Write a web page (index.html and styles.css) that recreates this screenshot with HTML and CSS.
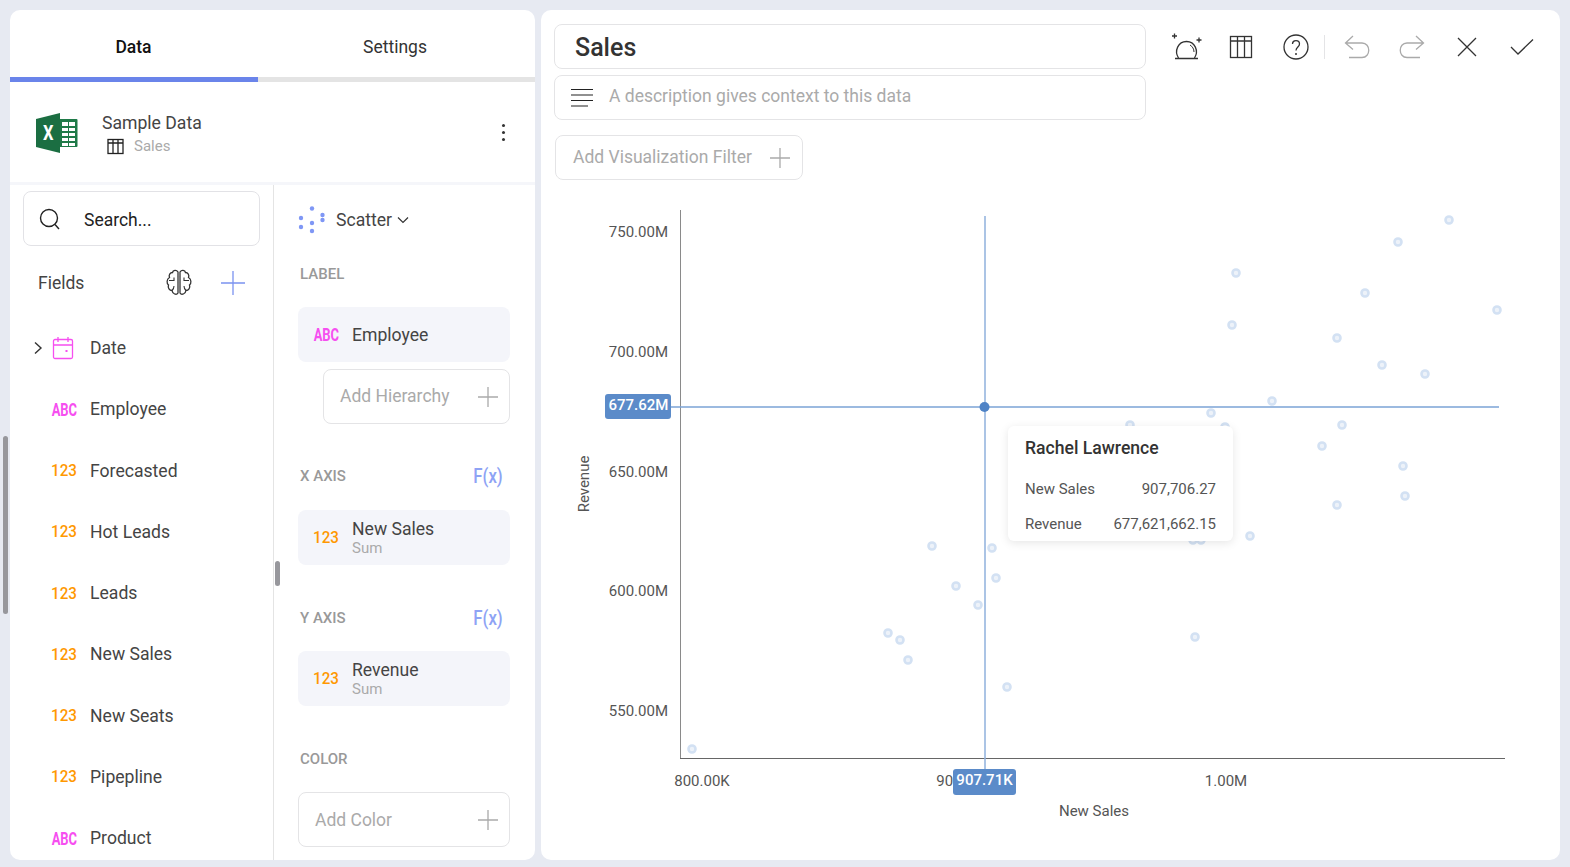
FILE: index.html
```html
<!DOCTYPE html>
<html lang="en">
<head>
  <meta charset="UTF-8">
  <title>Sales - Visualization Editor</title>
  <link rel="stylesheet" href="styles.css">
</head>
<body>
  <div class="page-scroll"></div>

  <div class="side-panel">
    <div class="tabs">
      <div class="tab active">Data</div>
      <div class="tab">Settings</div>
    </div>

    <div class="source">
      <svg class="excel-logo" width="42" height="40" viewBox="0 0 42 40">
        <rect x="22" y="6" width="19.500" height="28" rx="1" fill="#1f7a48"/>
        <g fill="#fff">
          <rect x="26" y="9" width="6" height="4"/><rect x="33" y="9" width="6" height="4"/>
          <rect x="26" y="15" width="6" height="3"/><rect x="33" y="15" width="6" height="3"/>
          <rect x="26" y="20" width="6" height="3"/><rect x="33" y="20" width="6" height="3"/>
          <rect x="26" y="25" width="6" height="3"/><rect x="33" y="25" width="6" height="3"/>
          <rect x="26" y="30" width="6" height="3"/><rect x="33" y="30" width="6" height="3"/>
        </g>
        <path d="M0 6 L24 0 V40 L0 34 Z" fill="#1b6e42"/>
        <text x="7" y="27" class="excel-x" textLength="10.500" lengthAdjust="spacingAndGlyphs">X</text>
      </svg>
      <div class="source-text">
        <div class="source-name">Sample Data</div>
        <div class="source-sub">
          <svg width="17" height="17" viewBox="0 0 17 17" fill="none" stroke="#222" stroke-width="1.300">
            <rect x="1" y="1.500" width="15" height="14"/>
            <path d="M1 5 H16 M6 1.500 V15.500 M11 1.500 V15.500"/>
          </svg>
          <span>Sales</span>
        </div>
      </div>
      <div class="kebab"><i></i><i></i><i></i></div>
    </div>

    <div class="columns">
      <div class="fields-col">
        <div class="search">
          <svg width="22" height="24" viewBox="0 0 22 24" fill="none" stroke="#222" stroke-width="1.400">
            <circle cx="10" cy="11" r="8.500"/>
            <path d="M16 17.500 L20 22"/>
          </svg>
          <span>Search...</span>
        </div>
        <div class="fields-head">
          <span>Fields</span>
          <svg class="brain" width="26" height="27" viewBox="0 0 26 27" fill="none" stroke="#333" stroke-width="1.300">
            <path d="M12 3 C10.500 .500 7 1 6.500 3.500 C4 3.500 2.500 6 3.500 8.500 C.500 10 .500 14.500 2.500 16 C1.500 19 3.500 21.500 6 21.500 C6.500 25 10.500 26.500 12 24 Z"/>
            <path d="M14 3 C15.500 .500 19 1 19.500 3.500 C22 3.500 23.500 6 22.500 8.500 C25.500 10 25.500 14.500 23.500 16 C24.500 19 22.500 21.500 20 21.500 C19.500 25 15.500 26.500 14 24 Z"/>
            <path d="M3 11.500 H8 V8.500 M23 11.500 H18 V8.500 M6 21.500 C7.500 20 8 19 8 17 M20 21.500 C18.500 20 18 19 18 17" stroke-width="1.100"/>
          </svg>
          <svg class="plus" width="24" height="24" viewBox="0 0 24 24" stroke="#7b93f0" stroke-width="1.300">
            <path d="M12 0 V24 M0 12 H24"/>
          </svg>
        </div>
        <div class="field-list">
          <div class="field">
            <svg class="expand" width="10" height="14" viewBox="0 0 10 14" fill="none" stroke="#333" stroke-width="1.400"><path d="M2 1.500 L8 7 L2 12.500"/></svg>
            <svg class="calendar" width="22" height="24" viewBox="0 0 22 24" fill="none" stroke="#f64ff0" stroke-width="1.300">
              <rect x="1.500" y="3.500" width="19" height="19" rx="1.500"/>
              <path d="M1.500 9 H20.500 M6 1 V6 M16 1 V6"/>
              <rect x="13.500" y="14" width="2" height="2" fill="#f64ff0" stroke="none"/>
            </svg>
            <span class="field-name">Date</span>
          </div>
          <div class="field"><b class="type abc">ABC</b><span class="field-name">Employee</span></div>
          <div class="field"><b class="type num">123</b><span class="field-name">Forecasted</span></div>
          <div class="field"><b class="type num">123</b><span class="field-name">Hot Leads</span></div>
          <div class="field"><b class="type num">123</b><span class="field-name">Leads</span></div>
          <div class="field"><b class="type num">123</b><span class="field-name">New Sales</span></div>
          <div class="field"><b class="type num">123</b><span class="field-name">New Seats</span></div>
          <div class="field"><b class="type num">123</b><span class="field-name">Pipepline</span></div>
          <div class="field"><b class="type abc">ABC</b><span class="field-name">Product</span></div>
        </div>
      </div>

      <div class="config-col">
        <div class="col-scroll"></div>
        <div class="chart-type">
          <svg width="30" height="28" viewBox="0 0 30 28" fill="#7f97f5">
            <circle cx="14" cy="2.500" r="2.200"/><circle cx="24.500" cy="9" r="2.200"/><circle cx="24.500" cy="14" r="2.200"/>
            <circle cx="3" cy="12" r="2.200"/><circle cx="14" cy="17" r="2.200"/><circle cx="3" cy="21" r="2.200"/><circle cx="14" cy="25" r="2.200"/>
          </svg>
          <span>Scatter</span>
          <svg width="12" height="8" viewBox="0 0 12 8" fill="none" stroke="#333" stroke-width="1.200"><path d="M1 1.500 L6 6.500 L11 1.500"/></svg>
        </div>

        <div class="section-head first">LABEL</div>
        <div class="pill"><b class="type abc">ABC</b><div class="pill-text"><div>Employee</div></div></div>
        <div class="add-box hierarchy"><span>Add Hierarchy</span>
          <svg width="20" height="20" viewBox="0 0 20 20" stroke="#aaa" stroke-width="1.300"><path d="M10 0 V20 M0 10 H20"/></svg>
        </div>

        <div class="section-head x-axis">X AXIS<em>F(x)</em></div>
        <div class="pill"><b class="type num">123</b><div class="pill-text"><div>New Sales</div><small>Sum</small></div></div>

        <div class="section-head y-axis">Y AXIS<em>F(x)</em></div>
        <div class="pill"><b class="type num">123</b><div class="pill-text"><div>Revenue</div><small>Sum</small></div></div>

        <div class="section-head color">COLOR</div>
        <div class="add-box"><span>Add Color</span>
          <svg width="20" height="20" viewBox="0 0 20 20" stroke="#aaa" stroke-width="1.300"><path d="M10 0 V20 M0 10 H20"/></svg>
        </div>
      </div>
    </div>
  </div>

  <div class="main-panel">
    <div class="top-row">
      <div class="title-col">
        <div class="title-input">Sales</div>
        <div class="desc-input">
          <svg width="24" height="20" viewBox="0 0 24 20" stroke="#222" stroke-width="1.200">
            <path d="M1 1.500 H23 M1 7 H23 M1 12.500 H23 M1 18 H18"/>
          </svg>
          <span>A description gives context to this data</span>
        </div>
      </div>
      <div class="toolbar">
        <div class="tool">
          <svg width="34" height="30" viewBox="0 0 34 30" fill="none" stroke="#333" stroke-width="1.300">
            <path d="M9.500 26 C5 19 9 9.500 17.500 9.500 C26 9.500 30 19 25.500 26"/>
            <path d="M6 26.500 H29"/>
            <path d="M21 13 C23.500 14.500 25 17 25 20" stroke-width="1"/>
            <path d="M5.500 1.500 V6.500 M3 4 H8 M30 5.500 V10.500 M27.500 8 H32.500" stroke-width="1.300"/>
          </svg>
        </div>
        <div class="tool">
          <svg width="24" height="24" viewBox="0 0 24 24" fill="none" stroke="#333" stroke-width="1.300">
            <rect x="1.500" y="1.500" width="21" height="21"/>
            <path d="M1.500 6 H22.500 M8.500 1.500 V22.500 M15.500 1.500 V22.500"/>
          </svg>
        </div>
        <div class="tool">
          <svg width="26" height="26" viewBox="0 0 26 26" fill="none" stroke="#333" stroke-width="1.300">
            <circle cx="13" cy="13" r="12"/>
            <path d="M9.500 10 C9.500 5.500 16.500 5.500 16.500 10 C16.500 13 13 13 13 16.500"/>
            <circle cx="13" cy="20" r="1" fill="#333" stroke="none"/>
          </svg>
        </div>
        <div class="tool-sep"></div>
        <div class="tool">
          <svg width="26" height="24" viewBox="0 0 26 24" fill="none" stroke="#aaa" stroke-width="1.300">
            <path d="M9 1 L1.500 8 L9 14.500 M1.500 8 H18 C27 8 27 22.500 18 22.500 H5"/>
          </svg>
        </div>
        <div class="tool">
          <svg width="26" height="24" viewBox="0 0 26 24" fill="none" stroke="#aaa" stroke-width="1.300">
            <path d="M17 1 L24.500 8 L17 14.500 M24.500 8 H8 C-1 8 -1 22.500 8 22.500 H21"/>
          </svg>
        </div>
        <div class="tool">
          <svg width="20" height="20" viewBox="0 0 20 20" stroke="#333" stroke-width="1.300"><path d="M1 1 L19 19 M19 1 L1 19"/></svg>
        </div>
        <div class="tool">
          <svg width="24" height="18" viewBox="0 0 24 18" fill="none" stroke="#333" stroke-width="1.300"><path d="M1 9 L8 16 L23 1.500"/></svg>
        </div>
      </div>
    </div>

    <div class="filter-box"><span>Add Visualization Filter</span>
      <svg width="20" height="20" viewBox="0 0 20 20" stroke="#aaa" stroke-width="1.300"><path d="M10 0 V20 M0 10 H20"/></svg>
    </div>

    <div class="chart">
      <svg class="plot" width="1017" height="670" viewBox="541 190 1017 670">
        <g class="tick">
          <text x="668" y="237">750.00M</text>
          <text x="668" y="357">700.00M</text>
          <text x="668" y="477">650.00M</text>
          <text x="668" y="596">600.00M</text>
          <text x="668" y="716">550.00M</text>
        </g>
        <g class="tick mid">
          <text x="702" y="786">800.00K</text>
          <text x="964" y="786">900.00K</text>
          <text x="1226" y="786">1.00M</text>
        </g>
        <text class="axis-title" x="1094" y="816">New Sales</text>
        <text class="axis-title" transform="translate(589 484) rotate(-90)">Revenue</text>

        <path class="axis-y" d="M680.500 210 V758"/>
        <path class="axis-x" d="M680 758.500 H1505"/>

        <g class="dots">
          <circle cx="1449" cy="220" r="3.500"/><circle cx="1398" cy="242" r="3.500"/><circle cx="1236" cy="273" r="3.500"/>
          <circle cx="1365" cy="293" r="3.500"/><circle cx="1497" cy="310" r="3.500"/><circle cx="1232" cy="325" r="3.500"/>
          <circle cx="1337" cy="338" r="3.500"/><circle cx="1382" cy="365" r="3.500"/><circle cx="1425" cy="374" r="3.500"/>
          <circle cx="1272" cy="401" r="3.500"/><circle cx="1211" cy="413" r="3.500"/><circle cx="1130" cy="425" r="3.500"/>
          <circle cx="1225" cy="427" r="3.500"/><circle cx="1342" cy="425" r="3.500"/><circle cx="1322" cy="446" r="3.500"/>
          <circle cx="1403" cy="466" r="3.500"/><circle cx="1405" cy="496" r="3.500"/><circle cx="1337" cy="505" r="3.500"/>
          <circle cx="1250" cy="536" r="3.500"/><circle cx="1193" cy="540" r="3.500"/><circle cx="1201" cy="540" r="3.500"/>
          <circle cx="932" cy="546" r="3.500"/><circle cx="992" cy="548" r="3.500"/><circle cx="996" cy="578" r="3.500"/>
          <circle cx="956" cy="586" r="3.500"/><circle cx="978" cy="605" r="3.500"/><circle cx="888" cy="633" r="3.500"/>
          <circle cx="900" cy="640" r="3.500"/><circle cx="1195" cy="637" r="3.500"/><circle cx="908" cy="660" r="3.500"/>
          <circle cx="1007" cy="687" r="3.500"/><circle cx="692" cy="749" r="3.500"/>
        </g>

        <path class="cross-h" d="M668 407 H1499"/>
        <path class="cross-v" d="M985 216 V770"/>
        <circle class="picked" cx="984.500" cy="407" r="5"/>

        <rect class="cross-tag" x="605" y="394" width="66" height="25" rx="3"/>
        <text class="cross-text" x="638.500" y="410">677.62M</text>
        <rect class="cross-tag" x="953" y="769" width="63" height="26" rx="3"/>
        <text class="cross-text" x="984.500" y="785">907.71K</text>
      </svg>

      <div class="tooltip">
        <div class="tooltip-title">Rachel Lawrence</div>
        <div class="tooltip-row"><span>New Sales</span><span>907,706.27</span></div>
        <div class="tooltip-row"><span>Revenue</span><span>677,621,662.15</span></div>
      </div>
    </div>
  </div>
</body>
</html>
```
FILE: styles.css
```css
* { box-sizing: border-box; }

body {
  margin: 0;
  height: 867px;
  padding: 10px 10px 7px 10px;
  display: flex;
  gap: 6px;
  overflow: hidden;
  position: relative;
  background: #e7eaf2;
  font-family: Roboto, "Liberation Sans", sans-serif;
  color: #333;
}

.page-scroll {
  position: absolute;
  left: 3px;
  top: 436px;
  width: 5px;
  height: 178px;
  border-radius: 3px;
  background: #97979c;
}

.side-panel {
  width: 525px;
  flex: none;
  display: flex;
  flex-direction: column;
  background: #fff;
  border-radius: 10px;
  overflow: hidden;
}

.tabs {
  display: flex;
  height: 72px;
  flex: none;
}

.tab {
  padding-top: 27px;
  text-align: center;
  font-size: 17.500px;
  color: #333;
  border-bottom: 5px solid #e4e4e4;
}

.tab:first-child { width: 248px; padding-right: 1px; }
.tab:last-child { width: 277px; padding-right: 3px; }

.tab.active {
  color: #111;
  font-weight: 500;
  border-bottom-color: #6a84ea;
}

.source {
  height: 103px;
  flex: none;
  display: flex;
  align-items: center;
  padding: 0 30px 0 26px;
  border-bottom: 3px solid #f5f6fa;
}

.excel-logo { margin-top: 2px; }

.excel-x {
  font-size: 20px;
  font-weight: 700;
  fill: #fff;
}

.source-text {
  margin-left: 24px;
  margin-top: 3px;
  flex: 1;
}

.source-name {
  font-size: 17.600px;
  line-height: 24px;
  color: #444;
}

.source-sub {
  display: flex;
  align-items: center;
  gap: 10px;
  font-size: 15px;
  line-height: 20px;
  color: #aaa;
  padding-left: 5px;
  margin-top: 1px;
}

.kebab {
  display: flex;
  flex-direction: column;
  gap: 4px;
}

.kebab i {
  width: 3px;
  height: 3px;
  border-radius: 50%;
  background: #333;
}

.columns {
  flex: 1;
  display: flex;
  min-height: 0;
}

.fields-col {
  width: 264px;
  flex: none;
  border-right: 1px solid #e4e4e4;
  padding: 6px 0 0 13px;
  overflow: hidden;
}

.search {
  width: 237px;
  height: 55px;
  display: flex;
  align-items: center;
  gap: 23px;
  padding: 3px 0 0 15px;
  border: 1px solid #e2e2e6;
  border-radius: 8px;
  font-size: 17.500px;
  color: #222;
}

.search svg { margin-top: -3px; }

.fields-head {
  height: 71.400px;
  display: flex;
  align-items: center;
  padding: 2px 0 0 15px;
  font-size: 17.500px;
  color: #444;
}

.fields-head span { flex: 1; }
.fields-head .brain { margin-right: 29px; }
.fields-head .plus { margin-right: 28px; margin-top: 1px; }

.field {
  height: 61.250px;
  display: flex;
  align-items: center;
  position: relative;
  padding-left: 27px;
  font-size: 17.600px;
}

.field-name {
  color: #444;
  margin-left: 14px;
}

.field .expand {
  position: absolute;
  left: 10px;
  top: 24px;
}

.field .calendar {
  margin-left: 2px;
  margin-right: 2px;
}

.type {
  display: block;
  width: 26px;
  flex: none;
  text-align: center;
}

.type.num {
  color: #ff9800;
  font-size: 16.500px;
  font-weight: 500;
  transform: scaleX(.92);
}

.type.abc {
  color: #f64ff0;
  font-size: 18px;
  font-weight: 700;
  transform: translateX(-2px) scaleX(.72);
}

.config-col {
  flex: 1;
  position: relative;
  padding: 0 25px 0 24px;
  overflow: hidden;
}

.col-scroll {
  position: absolute;
  left: 1px;
  top: 376px;
  width: 5px;
  height: 25px;
  border-radius: 3px;
  background: #97979c;
}

.chart-type {
  height: 69px;
  display: flex;
  align-items: center;
  font-size: 17.600px;
  color: #444;
}

.chart-type span { margin: 0 5px 0 8px; }

.section-head {
  display: flex;
  justify-content: space-between;
  align-items: center;
  height: 36px;
  font-size: 15px;
  font-weight: 500;
  color: #999;
  padding: 0 7px 0 2px;
}

.section-head em {
  font-style: normal;
  font-size: 21px;
  font-weight: 500;
  line-height: 24px;
  color: #8ea3f5;
  transform: scaleX(.8);
  transform-origin: right center;
}

.section-head.first { margin-top: 2px; margin-bottom: 15px; }
.section-head.x-axis { margin-top: 34px; margin-bottom: 16px; }
.section-head.y-axis { margin-top: 35px; margin-bottom: 15px; }
.section-head.color { margin-top: 35px; margin-bottom: 15px; }

.pill {
  height: 55px;
  display: flex;
  align-items: center;
  padding-left: 14px;
  background: #f4f5fa;
  border-radius: 8px;
  font-size: 17.600px;
  color: #444;
}

.pill-text {
  margin-left: 14px;
  line-height: 20px;
}

.pill-text small {
  display: block;
  font-size: 15px;
  line-height: 18px;
  color: #aaa;
}

.add-box {
  height: 55px;
  display: flex;
  justify-content: space-between;
  align-items: center;
  padding: 0 11px 0 16px;
  border: 1px solid #e4e4e6;
  border-radius: 8px;
  font-size: 17.500px;
  color: #aaa;
}

.add-box.hierarchy {
  margin-top: 7px;
  margin-left: 25px;
}

.add-box.hierarchy span { margin-top: -2px; }

.main-panel {
  flex: 1;
  display: flex;
  flex-direction: column;
  background: #fff;
  border-radius: 10px;
  padding: 14px 0 0 12px;
  overflow: hidden;
}

.top-row {
  display: flex;
  flex: none;
}

.title-col {
  width: 592px;
  flex: none;
  margin-left: 1px;
}

.title-input {
  height: 45px;
  padding-left: 20px;
  border: 1px solid #e4e4e6;
  border-radius: 8px;
  font-size: 25px;
  font-weight: 500;
  line-height: 45px;
  color: #333;
}

.desc-input {
  height: 45px;
  margin-top: 6px;
  display: flex;
  align-items: center;
  gap: 15px;
  padding: 0 0 3px 15px;
  border: 1px solid #e4e4e6;
  border-radius: 8px;
  font-size: 17.500px;
  color: #aaa;
}

.desc-input svg { margin-top: 3px; }

.toolbar {
  height: 45px;
  display: flex;
  align-items: center;
  padding-left: 12px;
}

.tool {
  width: 55px;
  height: 45px;
  display: flex;
  justify-content: center;
  align-items: center;
}

.tool-sep {
  width: 1px;
  height: 24px;
  margin: 0 4px 0 1px;
  background: #e4e4e6;
}

.filter-box {
  width: 248px;
  height: 45px;
  flex: none;
  margin: 15px 0 0 2px;
  display: flex;
  justify-content: space-between;
  align-items: center;
  padding: 0 12px 0 17px;
  border: 1px solid #e4e4e6;
  border-radius: 8px;
  font-size: 17.500px;
  color: #aaa;
}

.filter-box span { margin-top: -2px; }

.chart {
  position: relative;
  flex: 1;
  margin: 10px 0 0 -12px;
}

.plot { display: block; }

.tick text {
  font-size: 15px;
  fill: #555;
  text-anchor: end;
}

.tick.mid text { text-anchor: middle; }

.axis-title {
  font-size: 15px;
  fill: #555;
  text-anchor: middle;
}

.axis-y { stroke: #8a8a8a; stroke-width: 1; }
.axis-x { stroke: #666; stroke-width: 1; }

.dots circle {
  fill: #edf2f9;
  stroke: #d3e1f3;
  stroke-width: 2.600;
}

.cross-h { stroke: #7ba3d6; stroke-width: 1.500; }
.cross-v { stroke: #8fb0dc; stroke-width: 1.500; }
.picked { fill: #4f83c6; }
.cross-tag { fill: #5b8bc9; }

.cross-text {
  font-size: 15px;
  font-weight: 500;
  fill: #fff;
  text-anchor: middle;
}

.tooltip {
  position: absolute;
  left: 467px;
  top: 236px;
  width: 225px;
  height: 115px;
  padding: 10px 17px 0 17px;
  background: #fff;
  border-radius: 6px;
  box-shadow: 0 2px 10px rgba(0, 0, 0, .1);
}

.tooltip-title {
  font-size: 17.600px;
  font-weight: 500;
  line-height: 24px;
  color: #333;
  margin-bottom: 19px;
}

.tooltip-row {
  display: flex;
  justify-content: space-between;
  font-size: 15px;
  line-height: 20px;
  color: #555;
  margin-bottom: 15px;
}
```
